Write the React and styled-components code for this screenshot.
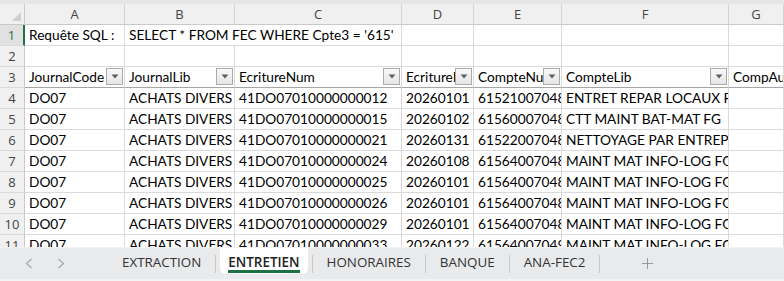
import { Fragment } from "react";
import styled, { createGlobalStyle } from "styled-components";

const GlobalStyle = createGlobalStyle`
  html, body {
    margin: 0;
    padding: 0;
    background: #ffffff;
  }
  body {
    width: 784px;
    height: 281px;
    overflow: hidden;
  }
`;

const LETTERS = ["A", "B", "C", "D", "E", "F", "G"];

const rows = [
  ["DO07", "ACHATS DIVERS", "41DO07010000000012", "20260101", "615210070480", "ENTRET REPAR LOCAUX FG"],
  ["DO07", "ACHATS DIVERS", "41DO07010000000015", "20260102", "615600070480", "CTT MAINT BAT-MAT FG"],
  ["DO07", "ACHATS DIVERS", "41DO07010000000021", "20260131", "615220070480", "NETTOYAGE PAR ENTREPRISE"],
  ["DO07", "ACHATS DIVERS", "41DO07010000000024", "20260108", "615640070480", "MAINT MAT INFO-LOG FG"],
  ["DO07", "ACHATS DIVERS", "41DO07010000000025", "20260101", "615640070480", "MAINT MAT INFO-LOG FG"],
  ["DO07", "ACHATS DIVERS", "41DO07010000000026", "20260101", "615640070480", "MAINT MAT INFO-LOG FG"],
  ["DO07", "ACHATS DIVERS", "41DO07010000000029", "20260101", "615640070480", "MAINT MAT INFO-LOG FG"],
  ["DO07", "ACHATS DIVERS", "41DO07010000000033", "20260122", "615640070490", "MAINT MAT INFO-LOG FG"],
];

const headers = ["JournalCode", "JournalLib", "EcritureNum", "EcritureDate", "CompteNum", "CompteLib", "CompAuxNum"];

const tabs = ["EXTRACTION", "ENTRETIEN", "HONORAIRES", "BANQUE", "ANA-FEC2"];

const Window = styled.div`
  display: flex;
  flex-direction: column;
  width: 784px;
  height: 281px;
  overflow: hidden;
  background: #ffffff;
`;

const TopEdge = styled.div`
  flex: none;
  height: 4px;
  background: #e6e6e6;
`;

const Sheet = styled.div`
  flex: 1;
  display: grid;
  grid-template-columns: 25px 100px 110px 167px 72px 88px 167px 1fr;
  grid-auto-rows: 21px;
  align-content: start;
  overflow: hidden;
`;

const Corner = styled.div`
  display: flex;
  align-items: flex-end;
  justify-content: flex-end;
  padding: 0 3px 3px 0;
  background: #f0f0f0;
  border-right: 1px solid #c9c9c9;
  border-bottom: 1px solid #c9c9c9;
  box-sizing: border-box;
`;

const ColHead = styled.div`
  display: flex;
  align-items: center;
  justify-content: center;
  background: #f0f0f0;
  border-right: 1px solid #d4d4d4;
  border-bottom: 1px solid #c9c9c9;
  box-sizing: border-box;
  font-family: "Open Sans", "Noto Sans", sans-serif;
  font-size: 13px;
  color: #444444;
`;

const RowHead = styled.div`
  display: flex;
  align-items: center;
  justify-content: center;
  background: ${(p) => (p.$active ? "#e1e1e1" : "#f0f0f0")};
  border-right: ${(p) => (p.$active ? "2px solid #217346" : "1px solid #c9c9c9")};
  border-bottom: 1px solid #dadada;
  box-sizing: border-box;
  font-family: "Open Sans", "Noto Sans", sans-serif;
  font-size: 13px;
  color: ${(p) => (p.$active ? "#217346" : "#444444")};
`;

const Cell = styled.div`
  display: flex;
  align-items: flex-end;
  grid-column: span ${(p) => p.$span || 1};
  padding: 0 0 1px 4px;
  border-right: 1px solid #dadada;
  border-bottom: 1px solid ${(p) => (p.$strong ? "#a6a6a6" : "#dadada")};
  box-sizing: border-box;
  overflow: hidden;
  white-space: nowrap;
  font-family: "Lato", "Liberation Sans", sans-serif;
  font-size: 13.7px;
  line-height: 19px;
  color: #000000;
`;

const CellText = styled.span`
  flex: 1;
  min-width: 0;
  overflow: hidden;
`;

const FilterButton = styled.span`
  flex: none;
  display: flex;
  align-items: center;
  justify-content: center;
  width: 17px;
  height: 17px;
  margin: 0 1px 0 0;
  align-self: center;
  box-sizing: border-box;
  border: 1px solid #ababab;
  background: linear-gradient(#f8f8f8, #e6e6e6);
`;

const TabBar = styled.div`
  flex: none;
  height: 34px;
  display: flex;
  align-items: flex-start;
  background: #e9eaeb;
  border-top: 1px solid #f2f2f2;
  border-bottom: 2px solid #f3f3f3;
  box-sizing: border-box;
  font-family: "Open Sans", "Noto Sans", sans-serif;
  font-size: 13.4px;
  color: #333333;
`;

const Nav = styled.div`
  flex: none;
  width: 108px;
  height: 31px;
  display: flex;
  align-items: center;
  gap: 24px;
  padding-left: 25px;
  box-sizing: border-box;
`;

const Tab = styled.div`
  flex: none;
  height: 26px;
  display: flex;
  align-items: flex-start;
  padding: 7px ${(p) => (p.$active ? "8px" : "14px")} 0;
  margin: 0 ${(p) => (p.$active ? "4px" : "0")};
  box-sizing: border-box;
  background: ${(p) => (p.$active ? "#ffffff" : "transparent")};
  border-radius: 0 0 6px 6px;
  font-weight: ${(p) => (p.$active ? 600 : 400)};
  color: ${(p) => (p.$active ? "#222222" : "#333333")};
`;

const TabLabel = styled.span`
  line-height: 14px;
  padding-bottom: 1px;
  border-bottom: 3px solid ${(p) => (p.$active ? "#1e7145" : "transparent")};
`;

const Separator = styled.span`
  flex: none;
  width: 1px;
  height: 18px;
  margin-top: 7px;
  background: #c8c8c8;
`;

const AddSheet = styled.div`
  flex: none;
  margin-left: 42px;
  margin-top: 10px;
  display: flex;
`;

function Arrow({ dir }) {
  return (
    <svg width="8" height="11" viewBox="0 0 8 11">
      <polyline
        points={dir === "left" ? "6.5,1 1.5,5.5 6.5,10" : "1.5,1 6.5,5.5 1.5,10"}
        fill="none"
        stroke="#a3a3a3"
        strokeWidth="1.1"
      />
    </svg>
  );
}

function Filter() {
  return (
    <FilterButton>
      <svg width="8" height="5" viewBox="0 0 8 5">
        <polygon points="0.5,0.5 7.5,0.5 4,4.5" fill="#5f5f5f" />
      </svg>
    </FilterButton>
  );
}

export default function App() {
  return (
    <>
      <GlobalStyle />
      <Window>
        <TopEdge />
        <Sheet>
          <Corner>
            <svg width="9" height="9" viewBox="0 0 9 9">
              <polygon points="9,0 9,9 0,9" fill="#cfcfcf" />
            </svg>
          </Corner>
          {LETTERS.map((l) => (
            <ColHead key={l}>{l}</ColHead>
          ))}

          <RowHead $active>1</RowHead>
          <Cell>Requête SQL :</Cell>
          <Cell $span={2}>SELECT * FROM FEC WHERE Cpte3 = '615'</Cell>
          <Cell />
          <Cell />
          <Cell />
          <Cell />

          <RowHead>2</RowHead>
          {LETTERS.map((l) => (
            <Cell key={l} />
          ))}

          <RowHead>3</RowHead>
          {headers.map((h, i) => (
            <Cell key={h} $strong>
              <CellText>{h}</CellText>
              {i < 6 && <Filter />}
            </Cell>
          ))}

          {rows.map((r, i) => (
            <Fragment key={i}>
              <RowHead>{i + 4}</RowHead>
              {r.map((v, j) => (
                <Cell key={j}>
                  <CellText>{v}</CellText>
                </Cell>
              ))}
              <Cell />
            </Fragment>
          ))}
        </Sheet>
        <TabBar>
          <Nav>
            <Arrow dir="left" />
            <Arrow dir="right" />
          </Nav>
          {tabs.map((t, i) => (
            <Fragment key={t}>
              {i > 0 && <Separator />}
              <Tab $active={t === "ENTRETIEN"}>
                <TabLabel $active={t === "ENTRETIEN"}>{t}</TabLabel>
              </Tab>
            </Fragment>
          ))}
          <Separator />
          <AddSheet>
            <svg width="11" height="11" viewBox="0 0 11 11">
              <path d="M5.5 0v11M0 5.5h11" stroke="#9a9a9a" strokeWidth="1" />
            </svg>
          </AddSheet>
        </TabBar>
      </Window>
    </>
  );
}
